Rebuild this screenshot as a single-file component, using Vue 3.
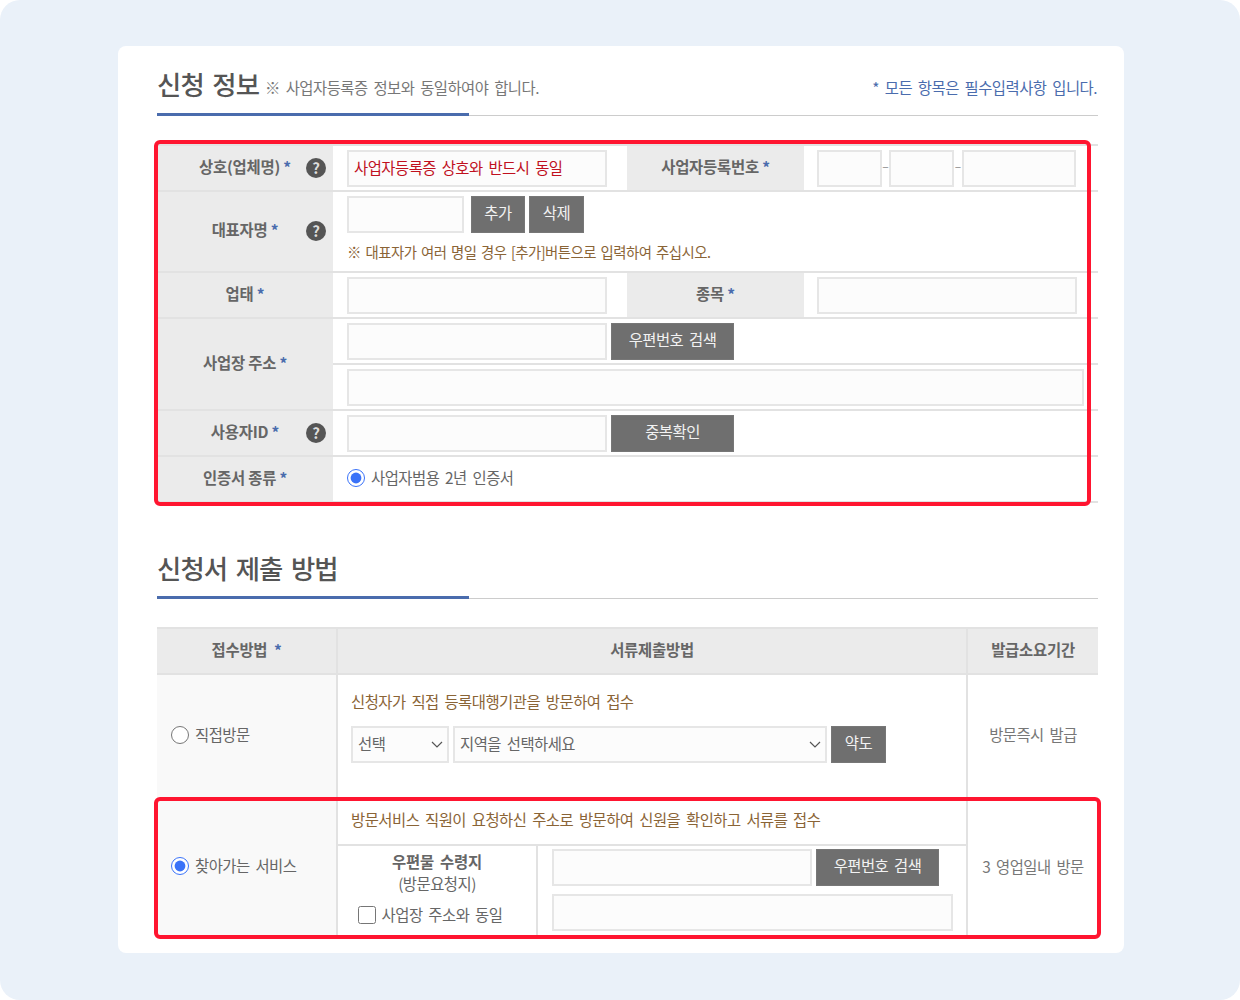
<template>
  <div class="page">
    <div class="card">
      <div class="section-title">
        <h2>신청 정보</h2>
        <span class="sub">※ 사업자등록증 정보와 동일하여야 합니다.</span>
        <span class="required-note">* 모든 항목은 필수입력사항 입니다.</span>
      </div>

      <div class="box-wrap">
        <table class="info-table">
          <colgroup>
            <col style="width: 176px" />
            <col style="width: 294px" />
            <col style="width: 177px" />
            <col />
          </colgroup>
          <tbody>
            <tr>
              <th class="has-help">상호(업체명) <em>*</em><span class="help">?</span></th>
              <td>
                <input class="field w260 red-text" value="사업자등록증 상호와 반드시 동일" />
              </td>
              <th>사업자등록번호 <em>*</em></th>
              <td class="biz-no">
                <input class="field w65" />
                <span class="dash">–</span>
                <input class="field w65" />
                <span class="dash last">–</span>
                <input class="field w114" />
              </td>
            </tr>
            <tr class="rep-row">
              <th class="has-help">대표자명 <em>*</em><span class="help up">?</span></th>
              <td colspan="3" class="rep-cell">
                <div class="line">
                  <input class="field w117" />
                  <button class="btn small">추가</button>
                  <button class="btn small tight">삭제</button>
                </div>
                <p class="note">※ 대표자가 여러 명일 경우 [추가]버튼으로 입력하여 주십시오.</p>
              </td>
            </tr>
            <tr>
              <th>업태 <em>*</em></th>
              <td><input class="field w260" /></td>
              <th>종목 <em>*</em></th>
              <td class="value-right"><input class="field w260" /></td>
            </tr>
            <tr>
              <th rowspan="2">사업장 주소 <em>*</em></th>
              <td colspan="3">
                <div class="line">
                  <input class="field w260" />
                  <button class="btn wide">우편번호 검색</button>
                </div>
              </td>
            </tr>
            <tr>
              <td colspan="3"><input class="field w737" /></td>
            </tr>
            <tr>
              <th class="has-help">사용자ID <em>*</em><span class="help">?</span></th>
              <td colspan="3">
                <div class="line">
                  <input class="field w260" />
                  <button class="btn wide">중복확인</button>
                </div>
              </td>
            </tr>
            <tr>
              <th>인증서 종류 <em>*</em></th>
              <td colspan="3">
                <label class="check">
                  <input type="radio" name="cert" checked />
                  <span>사업자범용 2년 인증서</span>
                </label>
              </td>
            </tr>
          </tbody>
        </table>
        <div class="highlight hl-one"></div>
      </div>

      <div class="section-title second">
        <h2>신청서 제출 방법</h2>
      </div>

      <div class="box-wrap">
        <table class="submit-table">
          <colgroup>
            <col style="width: 180px" />
            <col style="width: 200px" />
            <col style="width: 430px" />
            <col />
          </colgroup>
          <thead>
            <tr>
              <th>접수방법 &nbsp;<em>*</em></th>
              <th colspan="2">서류제출방법</th>
              <th>발급소요기간</th>
            </tr>
          </thead>
          <tbody>
            <tr class="visit-row">
              <td class="method">
                <label class="check">
                  <input type="radio" name="method" />
                  <span>직접방문</span>
                </label>
              </td>
              <td colspan="2" class="desc-cell">
                <p class="guide">신청자가 직접 등록대행기관을 방문하여 접수</p>
                <div class="line">
                  <div class="select-box w98">
                    <select><option>선택</option></select>
                    <svg viewBox="0 0 12 8" width="12" height="8"><path d="M1 1l5 5 5-5" /></svg>
                  </div>
                  <div class="select-box w374">
                    <select><option>지역을 선택하세요</option></select>
                    <svg viewBox="0 0 12 8" width="12" height="8"><path d="M1 1l5 5 5-5" /></svg>
                  </div>
                  <button class="btn map">약도</button>
                </div>
              </td>
              <td class="period">방문즉시 발급</td>
            </tr>
            <tr class="guide-row">
              <td rowspan="2" class="method">
                <label class="check">
                  <input type="radio" name="method" checked />
                  <span>찾아가는 서비스</span>
                </label>
              </td>
              <td colspan="2" class="guide-cell">
                <p class="guide">방문서비스 직원이 요청하신 주소로 방문하여 신원을 확인하고 서류를 접수</p>
              </td>
              <td rowspan="2" class="period">3 영업일내 방문</td>
            </tr>
            <tr class="addr-row">
              <td class="receiver">
                <strong>우편물 수령지</strong>
                <span>(방문요청지)</span>
                <label class="check small-check">
                  <input type="checkbox" />
                  <span>사업장 주소와 동일</span>
                </label>
              </td>
              <td class="addr-cell">
                <div class="line">
                  <input class="field w260" />
                  <button class="btn wide">우편번호 검색</button>
                </div>
                <input class="field w401" />
              </td>
            </tr>
          </tbody>
        </table>
        <div class="highlight hl-two"></div>
      </div>
    </div>
  </div>
</template>

<script setup>
</script>

<style>
html,
body {
  margin: 0;
  background: #fff;
}
</style>

<style scoped>
.page {
  box-sizing: border-box;
  width: 1240px;
  height: 1000px;
  padding: 46px 116px 47px 118px;
  border-radius: 20px;
  background: #eaf1f9;
  font-family: "Noto Sans CJK KR", "Noto Sans", sans-serif;
  font-size: 15.4px;
  letter-spacing: -0.5px;
  word-spacing: 2.8px;
  color: #666;
  overflow: hidden;
}

.card {
  box-sizing: border-box;
  height: 907px;
  padding: 0 26px 0 39px;
  background: #fff;
  border-radius: 8px;
}

.section-title {
  position: relative;
  display: flex;
  align-items: baseline;
  height: 70px;
  box-sizing: border-box;
  padding-top: 19px;
  border-bottom: 1px solid #ccc;
}

.section-title::after {
  content: "";
  position: absolute;
  left: 0;
  bottom: -1px;
  width: 312px;
  height: 3px;
  background: #4a6cad;
}

.section-title.second {
  margin-top: 26px;
  padding-top: 20px;
}

.section-title h2 {
  margin: 0;
  font-size: 26.4px;
  font-weight: 500;
  line-height: 38px;
  letter-spacing: -0.9px;
  word-spacing: 3.5px;
  color: #555;
}

.sub {
  position: relative;
  top: -1px;
  margin-left: 6px;
  color: #777;
}

.required-note {
  position: relative;
  top: -1px;
  margin-left: auto;
  margin-right: 1px;
  color: #4a6cad;
}

.box-wrap {
  position: relative;
  margin-top: 28px;
}

.highlight {
  position: absolute;
  box-sizing: border-box;
  border: 4px solid #ff1530;
  border-radius: 6px;
  pointer-events: none;
}

.hl-one {
  left: -3px;
  top: -4px;
  width: 937px;
  height: 366px;
}

.hl-two {
  left: -3px;
  top: 170px;
  width: 947px;
  height: 142px;
}

table {
  width: 100%;
  border-collapse: collapse;
  table-layout: fixed;
}

.info-table {
  border-top: 2px solid #e2e2e2;
}

.info-table th,
.info-table td {
  height: 46px;
  padding: 0 0 0 14px;
  border-bottom: 2px solid #e2e2e2;
  box-sizing: border-box;
}

.info-table th {
  position: relative;
  padding: 0 0 5px;
  background: #ebebeb;
  font-weight: 700;
  letter-spacing: -0.2px;
  word-spacing: 0;
  color: #666;
  text-align: center;
}

em {
  font-style: normal;
  color: #4a6cad;
  font-weight: 700;
}

.help {
  position: absolute;
  right: 7px;
  top: 50%;
  width: 20px;
  height: 20px;
  margin-top: -10px;
  border-radius: 50%;
  background: #555;
  color: #ddd;
  font-size: 15px;
  font-weight: 700;
  line-height: 20px;
  text-align: center;
}

.help.up {
  margin-top: -11px;
}

.field {
  box-sizing: border-box;
  display: block;
  height: 37px;
  padding: 0 5px 2px;
  border: 2px solid #e6e6e6;
  background: #fcfcfc;
  font-family: inherit;
  font-size: 15.4px;
  letter-spacing: inherit;
  word-spacing: inherit;
  color: #666;
  outline: none;
}

.red-text {
  color: #c0101e;
}

.w260 {
  width: 260px;
}

.w65 {
  width: 65px;
}

.w114 {
  width: 114px;
}

.w117 {
  width: 117px;
}

.w737 {
  width: 737px;
}

.w401 {
  width: 401px;
}

.line {
  display: flex;
  align-items: center;
}

.info-table td.biz-no,
.info-table td.value-right {
  padding-left: 13px;
}

.biz-no {
  white-space: nowrap;
  font-size: 0;
}

.biz-no .field {
  display: inline-block;
  vertical-align: middle;
}

.dash {
  display: inline-block;
  width: 7px;
  padding-bottom: 6px;
  font-size: 12px;
  letter-spacing: 0;
  color: #888;
  text-align: center;
  vertical-align: middle;
}

.dash.last {
  width: 8px;
}

.btn {
  box-sizing: border-box;
  height: 37px;
  padding: 0 0 5px;
  border: 1px solid #777;
  background: #6f6f6f;
  color: #f2f2f2;
  font-family: inherit;
  font-size: 15.4px;
  letter-spacing: inherit;
  word-spacing: inherit;
}

.btn.small {
  width: 54px;
  margin-left: 7px;
}

.btn.small.tight {
  width: 55px;
  margin-left: 4px;
}

.btn.wide {
  width: 123px;
  margin-left: 4px;
}

.btn.map {
  width: 55px;
  margin-left: 4px;
}

.info-table .rep-row td,
.info-table .rep-row th {
  height: 81px;
}

.info-table .rep-row td {
  vertical-align: top;
  padding-top: 4px;
}

.note {
  margin: 8px 0 0;
  font-size: 14.4px;
  word-spacing: 1.8px;
  line-height: 22px;
  color: #8a6436;
}

.check {
  display: inline-flex;
  align-items: center;
  gap: 6px;
  color: #666;
}

.check input {
  width: 18px;
  height: 18px;
  margin: 0;
  accent-color: #3a72f8;
}

.check span {
  position: relative;
  top: -1px;
}

.submit-table {
  border-top: 2px solid #e2e2e2;
}

.submit-table th {
  height: 46px;
  padding: 0 0 5px;
  background: #ebebeb;
  border-bottom: 2px solid #e2e2e2;
  border-right: 2px solid #e2e2e2;
  box-sizing: border-box;
  font-weight: 700;
  letter-spacing: -0.2px;
  word-spacing: 0;
  color: #666;
}

.submit-table th:last-child {
  border-right: none;
}

.submit-table td {
  box-sizing: border-box;
  border-right: 2px solid #e2e2e2;
}

.submit-table td.period {
  border-right: none;
  padding-bottom: 3px;
  text-align: center;
  color: #777;
}

.method {
  padding: 0 0 1px 14px;
  background: #f9f9f9;
}

.visit-row td {
  height: 123px;
}

.visit-row td.period {
  vertical-align: top;
  padding-top: 48px;
}

.desc-cell {
  vertical-align: top;
  padding: 14px 0 0 13px;
}

.guide {
  margin: 0;
  line-height: 24px;
  color: #8a6436;
}

.desc-cell .line {
  margin-top: 13px;
}

.select-box {
  position: relative;
  height: 37px;
}

.w98 {
  width: 98px;
  margin-right: 4px;
}

.w374 {
  width: 374px;
}

.select-box select {
  box-sizing: border-box;
  display: block;
  width: 100%;
  height: 100%;
  padding: 0 5px 4px;
  appearance: none;
  border: 2px solid #e6e6e6;
  border-radius: 0;
  background: #fcfcfc;
  font-family: inherit;
  font-size: 15.4px;
  letter-spacing: inherit;
  word-spacing: inherit;
  color: #666;
  outline: none;
}

.select-box svg {
  position: absolute;
  right: 6px;
  top: 15px;
  fill: none;
  stroke: #555;
  stroke-width: 1.2;
  pointer-events: none;
}

.guide-row td {
  height: 48px;
}

.guide-cell {
  padding: 0 0 3px 13px;
  border-bottom: 2px solid #e2e2e2;
}

.addr-row td {
  height: 92px;
}

.receiver {
  padding: 0;
  text-align: center;
  vertical-align: top;
  line-height: 22px;
}

.receiver strong {
  display: block;
  margin-top: 4px;
  font-weight: 700;
  letter-spacing: -0.2px;
  color: #666;
}

.receiver > span {
  display: block;
}

.small-check {
  margin: 10px 14px 0 0;
}

.addr-cell {
  padding: 3px 0 0 14px;
  vertical-align: top;
}

.addr-cell .field.w401 {
  margin-top: 8px;
}
</style>
